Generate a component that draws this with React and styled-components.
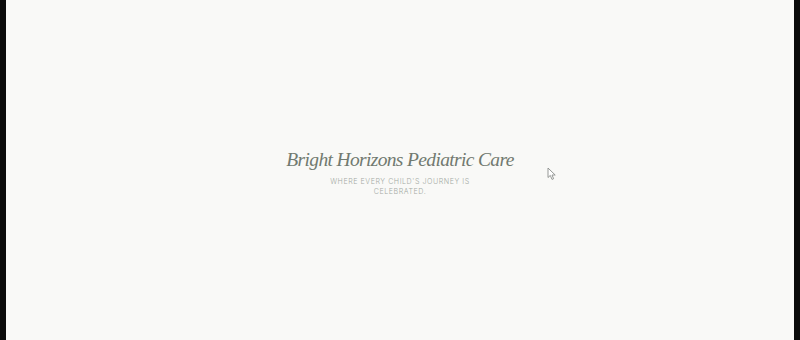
import React from "react";
import styled, { createGlobalStyle } from "styled-components";

const Global = createGlobalStyle`
  html, body { margin: 0; padding: 0; background: #0b0b0b; }
  #root { height: 340px; }
`;

const Frame = styled.div`
  height: 340px;
  padding: 0 6px;
  box-sizing: border-box;
  background: #0b0b0b;
  display: flex;
`;

const Page = styled.main`
  flex: 1;
  position: relative;
  background: #f9f9f7;
  display: flex;
  flex-direction: column;
  align-items: center;
  justify-content: center;
  padding-top: 3px;
  box-sizing: border-box;
`;

const Title = styled.h1`
  margin: 0;
  font-family: "Liberation Serif", serif;
  font-style: italic;
  font-weight: 400;
  font-size: 19.5px;
  letter-spacing: -0.65px;
  line-height: 26px;
  color: #717a70;
`;

const Tagline = styled.p`
  margin: 4px 0 0;
  width: 150px;
  text-align: center;
  font-family: "Inter", "Liberation Sans", sans-serif;
  font-size: 7.1px;
  font-weight: 300;
  letter-spacing: 0.55px;
  line-height: 9.5px;
  text-transform: uppercase;
  color: #a3a9a3;
`;

const Cursor = styled.svg`
  position: absolute;
  left: 541px;
  top: 167px;
  width: 10px;
  height: 14px;
`;

export default function App() {
  return (
    <>
      <Global />
      <Frame>
        <Page>
          <Title>Bright Horizons Pediatric Care</Title>
          <Tagline>Where every child's journey is celebrated.</Tagline>
          <Cursor viewBox="0 0 10 14">
            <path
              d="M1 1 L1 10.5 L3.3 8.4 L5 12.4 L6.6 11.7 L5 8 L8.2 8 Z"
              fill="#ffffff"
              stroke="#8a8d8a"
              strokeWidth="0.9"
              strokeLinejoin="round"
            />
          </Cursor>
        </Page>
      </Frame>
    </>
  );
}
